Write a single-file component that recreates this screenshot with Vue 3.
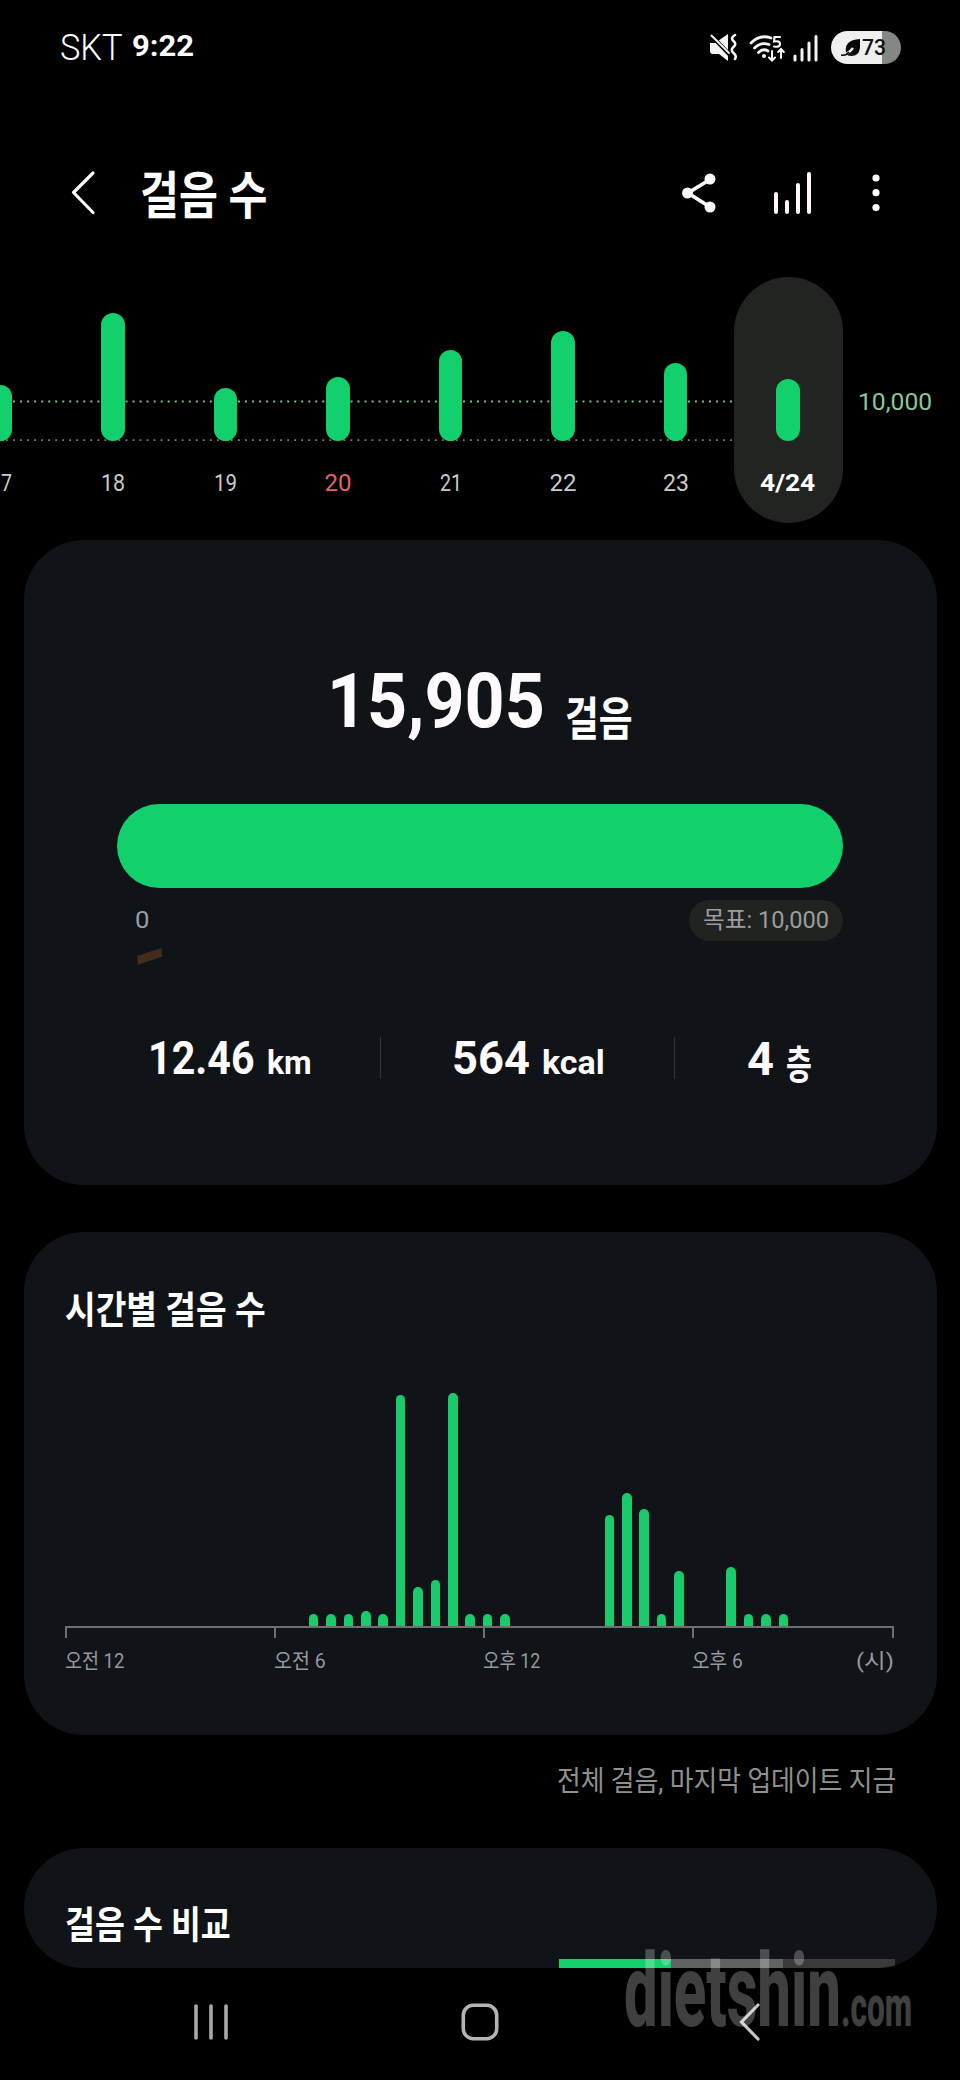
<script setup>
// Scales a label horizontally so that it occupies the given width in the row.
const vFit = {
  mounted(el, binding) {
    const natural = el.offsetWidth
    el.style.transform = `scaleX(${binding.value / natural})`
    el.style.marginRight = `${binding.value - natural}px`
  },
}

const days = [
  { label: '17', h: 56, w: 22 },
  { label: '18', h: 128, w: 24 },
  { label: '19', h: 53, w: 23 },
  { label: '20', h: 64, w: 27, holiday: true },
  { label: '21', h: 91, w: 22 },
  { label: '22', h: 110, w: 27 },
  { label: '23', h: 78, w: 26 },
  { label: '4/24', h: 62, w: 55, today: true },
]

const half = Array(48).fill(0)
Object.assign(half, {
  14: 12, 15: 12, 16: 12, 17: 15, 18: 12, 19: 231, 20: 39, 21: 46, 22: 233,
  23: 12, 24: 12, 25: 12, 31: 111, 32: 133, 33: 117, 34: 12, 35: 55,
  38: 59, 39: 12, 40: 12, 41: 12,
})

const hours = [
  { label: '오전 12', w: 59 },
  { label: '오전 6', w: 52 },
  { label: '오후 12', w: 57 },
  { label: '오후 6', w: 51 },
]
</script>

<template>
  <div class="phone">
    <header class="status">
      <span v-fit="63" class="carrier">SKT</span>
      <span v-fit="62" class="clock">9:22</span>
      <span class="grow"></span>
      <svg class="ic-mute" width="28" height="30" viewBox="0 0 28 30">
        <path d="M1 10h5L19 1v27l-9-7H4q-3 0-3-3z" fill="#f4f4f4" />
        <path d="M0 0L21 22" stroke="#000" stroke-width="4" />
        <path d="M2.500 2.500L20 20" stroke="#f4f4f4" stroke-width="2" stroke-linecap="round" />
        <path d="M26 2q-5 3-1.500 6t0 6 0 6 1.500 6" fill="none" stroke="#f4f4f4" stroke-width="2.600" stroke-linecap="round" />
      </svg>
      <svg class="ic-wifi" width="36" height="28" viewBox="0 0 36 28">
        <g fill="none" stroke="#f4f4f4" stroke-width="2.800" stroke-linecap="round">
          <path d="M2 9Q11 0 22 4" />
          <path d="M5.500 14Q12 7.500 20 10.500" />
          <path d="M9.500 18.500Q14 14 19 17" />
          <path d="M31 3h-5.500l-.4 4.500q5.900-1 5.900 2.500t-6 2.500" stroke-width="2.200" />
          <path d="M23 17v9M20 23.500l3 3 3-3M32 24v-8.500M29.200 18l2.800-3 2.800 3" stroke-width="2" />
        </g>
        <circle cx="15" cy="22" r="2" fill="#f4f4f4" />
      </svg>
      <svg class="ic-signal" width="26" height="28" viewBox="0 0 26 28">
        <path d="M2 22v4M9 15.500v10.500M16 9v17M23 2.500v23.500" stroke="#f4f4f4" stroke-width="3" stroke-linecap="round" />
      </svg>
      <span class="battery">
        <svg width="20" height="18" viewBox="0 0 20 18">
          <path d="M19 0v9q-1 8-9 8-3 0-5-2Q3 5 11 1.500 15 0 19 0z" fill="#050505" />
          <path d="M1 15.500q6 0 11-6.500" fill="none" stroke="#efefef" stroke-width="2.400" />
          <path d="M0 16q5 1 8-3" fill="none" stroke="#050505" stroke-width="1.600" />
        </svg>
        <span v-fit="24" class="level">73</span>
      </span>
    </header>

    <div class="appbar">
      <svg class="ic-back" width="26" height="46" viewBox="0 0 26 46">
        <path d="M23 3L3.500 22.500 23 42.500" fill="none" stroke="#fafafa" stroke-width="3.200" stroke-linecap="round" stroke-linejoin="round" />
      </svg>
      <h1 v-fit="127" class="title">걸음 수</h1>
      <span class="grow"></span>
      <svg class="ic-share" width="36" height="40" viewBox="0 0 36 40">
        <path d="M29 6.500L7 20l22 14" fill="none" stroke="#fafafa" stroke-width="3.800" />
        <circle cx="6.500" cy="20" r="5.500" fill="#fafafa" />
        <circle cx="29" cy="6" r="5.500" fill="#fafafa" />
        <circle cx="29" cy="34" r="5.500" fill="#fafafa" />
      </svg>
      <svg class="ic-chart" width="40" height="44" viewBox="0 0 40 44">
        <path d="M3 23v18M14 31v10M25 14v27M36 3v38" stroke="#fff7fc" stroke-width="4" stroke-linecap="round" />
      </svg>
      <svg class="ic-more" width="8" height="40" viewBox="0 0 8 40">
        <circle cx="4" cy="5" r="3.600" fill="#fafafa" />
        <circle cx="4" cy="19.700" r="3.600" fill="#fafafa" />
        <circle cx="4" cy="34.500" r="3.600" fill="#fafafa" />
      </svg>
    </div>

    <section class="week">
      <svg class="guides" width="732" height="44" viewBox="0 0 732 44">
        <path d="M6 2.500H732" stroke="#83ba92" stroke-width="2" stroke-dasharray="2 5.030" />
        <path d="M6 41.200H732" stroke="#7d7d7d" stroke-width="1.800" stroke-dasharray="1.800 5.230" />
      </svg>
      <div v-for="d in days" :key="d.label" class="day" :class="{ today: d.today, holiday: d.holiday }">
        <i class="bar" :style="{ height: d.h + 'px' }"></i>
        <span class="day-label"><span v-fit="d.w" class="fit">{{ d.label }}</span></span>
      </div>
      <span class="goal-line"><span v-fit="74" class="fit">10,000</span></span>
    </section>

    <section class="card summary">
      <div class="total">
        <span v-fit="218" class="count">15,905</span>
        <span v-fit="68" class="unit">걸음</span>
      </div>
      <div class="progress"></div>
      <div class="scale">
        <span v-fit="15" class="zero">0</span>
        <span class="goal"><span v-fit="126" class="fit">목표: 10,000</span></span>
      </div>
      <svg class="confetti" width="28" height="20" viewBox="0 0 28 20">
        <path d="M1 9L25.500 1l.7 8.500L2 18z" fill="#402d1b" />
      </svg>
      <div class="stats">
        <div class="stat km"><span v-fit="107" class="num">12.46</span><span v-fit="45" class="lab">km</span></div>
        <i class="rule"></i>
        <div class="stat kcal"><span v-fit="78" class="num">564</span><span v-fit="63" class="lab">kcal</span></div>
        <i class="rule"></i>
        <div class="stat floors"><span v-fit="27" class="num">4</span><span v-fit="26" class="lab ko">층</span></div>
      </div>
    </section>

    <section class="card hourly">
      <h2 class="card-title"><span v-fit="201" class="fit">시간별 걸음 수</span></h2>
      <div class="plot">
        <div v-for="(h, i) in half" :key="i" class="slot">
          <i v-if="h" class="hbar" :style="{ height: h + 'px' }"></i>
        </div>
      </div>
      <div class="axis"><i></i><i></i><i></i><i></i></div>
      <div class="hours">
        <span v-for="t in hours" :key="t.label" class="hour"><span v-fit="t.w" class="fit">{{ t.label }}</span></span>
        <span class="hour-unit"><span v-fit="38" class="fit">(시)</span></span>
      </div>
    </section>

    <p class="updated"><span v-fit="339" class="fit">전체 걸음, 마지막 업데이트 지금</span></p>

    <section class="card compare">
      <h2 class="card-title"><span v-fit="166" class="fit">걸음 수 비교</span></h2>
      <div class="strip"><i></i><i></i><i></i></div>
    </section>

    <nav class="nav">
      <svg width="36" height="40" viewBox="0 0 36 40">
        <path d="M3 4v32M18 4v32M33 4v32" stroke="#a9a9a9" stroke-width="3.600" stroke-linecap="round" />
      </svg>
      <svg class="home" width="38" height="40" viewBox="0 0 38 40">
        <rect x="2.300" y="3.300" width="33.400" height="33.400" rx="10" fill="none" stroke="#b4b4b4" stroke-width="3.600" />
      </svg>
      <svg width="22" height="40" viewBox="0 0 22 40">
        <path d="M19 3L2.500 20 19 37" fill="none" stroke="#c6c6c6" stroke-width="3.200" stroke-linecap="round" />
      </svg>
    </nav>

    <div class="watermark">
      <span v-fit="217" class="wm-name">dietshin</span><span v-fit="71" class="wm-tld">.com</span>
    </div>
  </div>
</template>

<style>
body {
  background: #000;
}
</style>

<style scoped>
.phone {
  position: relative;
  box-sizing: border-box;
  width: 960px;
  height: 2080px;
  overflow: hidden;
  background: #000;
  color: #fff;
  font-family: Roboto, 'Noto Sans CJK KR', sans-serif;
  white-space: nowrap;
}
.grow {
  flex: 1;
}
.fit,
.carrier,
.clock,
.level,
.title,
.count,
.unit,
.zero,
.num,
.lab,
.wm-name,
.wm-tld {
  display: inline-block;
  transform-origin: 0 50%;
}
h1,
h2,
p {
  margin: 0;
}
i {
  display: block;
}

.status {
  display: flex;
  align-items: center;
  height: 95px;
  padding: 0 59px 0 60px;
}
.carrier {
  font-size: 36px;
  font-weight: 300;
}
.clock {
  margin-left: 9px;
  padding-bottom: 4px;
  font-size: 30px;
  font-weight: 700;
}
.ic-wifi {
  margin-left: 12px;
}
.ic-signal {
  margin-left: 8px;
}
.battery {
  display: flex;
  align-items: center;
  box-sizing: border-box;
  width: 70px;
  height: 33px;
  margin-left: 12px;
  padding-left: 10px;
  border-radius: 17px;
  background: linear-gradient(90deg, #efefef 51px, #858785 51px);
  color: #111;
}
.level {
  margin-left: 1px;
  font-size: 22px;
  font-weight: 500;
}

.appbar {
  display: flex;
  align-items: center;
  height: 196px;
  margin-top: 0;
  padding: 0 80px 0 70px;
}
.title {
  margin-left: 44px;
  padding-top: 8px;
  font-size: 51px;
  font-weight: 700;
  line-height: 76px;
}
.ic-chart {
  margin-left: 56px;
}
.ic-more {
  margin-left: 59px;
}

.week {
  position: relative;
  display: flex;
  height: 246px;
  margin: -14px 0 17px -54px;
}
.guides {
  position: absolute;
  left: 54px;
  top: 122px;
}
.day {
  position: relative;
  display: flex;
  flex-direction: column;
  align-items: center;
  justify-content: flex-end;
  flex: none;
  box-sizing: border-box;
  width: 109px;
  height: 246px;
  margin-right: 3.500px;
  padding-bottom: 23px;
}
.bar {
  width: 23.600px;
  border-radius: 12px;
  background: #12d06c;
}
.day-label {
  height: 34px;
  margin-top: 25px;
  color: #cacaca;
  font-size: 24px;
  line-height: 34px;
}
.holiday .day-label {
  color: #e0646c;
}
.today {
  border-radius: 55px;
  background: #222422;
}
.today .day-label {
  color: #fff;
  font-weight: 700;
}
.goal-line {
  margin: 108px 0 0 12px;
  color: #8cc795;
  font-size: 24px;
  line-height: 34px;
}

.card {
  box-sizing: border-box;
  width: 913px;
  margin-left: 24px;
  border-radius: 60px;
  background: #101317;
}
.summary {
  height: 645px;
  padding: 111px 94px 0 93px;
}
.total {
  display: flex;
  align-items: baseline;
  height: 153px;
  padding-left: 210px;
}
.count {
  color: #fffafd;
  font-size: 76px;
  font-weight: 700;
  line-height: 100px;
}
.unit {
  position: relative;
  top: 8px;
  margin-left: 20px;
  font-size: 46px;
  font-weight: 700;
  line-height: 60px;
}
.progress {
  height: 84px;
  border-radius: 42px;
  background: #12d06c;
}
.scale {
  display: flex;
  justify-content: space-between;
  height: 41px;
  margin-top: 12px;
  color: #9b9da0;
  font-size: 24px;
  line-height: 41px;
}
.zero {
  margin-left: 18px;
}
.goal {
  padding: 0 14px;
  border-radius: 21px;
  background: #20231f;
}
.goal .fit {
  line-height: 39px;
}
.confetti {
  display: block;
  margin: 6px 0 0 19px;
}
.stats {
  display: flex;
  align-items: center;
  height: 42px;
  margin-top: 70px;
}
.stat {
  display: flex;
  align-items: baseline;
  padding-top: 4px;
  color: #fffafd;
  font-weight: 700;
}
.num {
  font-size: 47px;
  line-height: 50px;
}
.lab {
  font-size: 34px;
  line-height: 50px;
}
.ko {
  position: relative;
  top: 4px;
  font-size: 40px;
}
.km {
  width: 232px;
  padding-left: 31px;
  gap: 12px;
}
.kcal {
  width: 222px;
  padding-left: 71px;
  gap: 12px;
}
.floors {
  padding-left: 72px;
  gap: 12px;
}
.rule {
  width: 1px;
  height: 42px;
  background: #303337;
}

.hourly {
  height: 503px;
  margin-top: 47px;
  padding: 50px 0 0 41px;
}
.card-title {
  height: 56px;
  font-size: 38px;
  font-weight: 700;
  line-height: 56px;
}
.plot {
  display: flex;
  align-items: flex-end;
  height: 288px;
}
.slot {
  flex: none;
  width: 17.420px;
}
.hbar {
  width: 9.600px;
  border-radius: 5px 5px 0 0;
  background: #1acb6c;
}
.axis {
  display: flex;
  box-sizing: border-box;
  width: 829px;
  height: 12px;
  border-top: 2px solid #6d6f71;
  border-right: 2px solid #6d6f71;
}
.axis i {
  box-sizing: border-box;
  flex: none;
  width: 209px;
  border-left: 2px solid #6d6f71;
}
.axis i:last-child {
  width: 200px;
}
.hours {
  display: flex;
  height: 32px;
  margin-top: 7px;
  color: #97999c;
  font-size: 21px;
  line-height: 32px;
}
.hour {
  width: 209px;
}
.hour-unit {
  margin-left: -45px;
}

.updated {
  height: 44px;
  margin: 25px 64px 0 0;
  color: #909090;
  font-size: 28px;
  line-height: 44px;
  text-align: right;
}

.compare {
  height: 120px;
  margin-top: 44px;
  padding: 49px 0 0 41px;
  overflow: hidden;
}
.strip {
  display: flex;
  height: 9px;
  margin: 6px 0 0 494px;
}
.strip i {
  width: 112px;
  background: #12d06c;
}
.strip i:nth-child(2) {
  background: #606263;
}
.strip i:nth-child(3) {
  background: #3b3b3b;
}

.nav {
  display: flex;
  justify-content: space-between;
  height: 40px;
  margin-top: 34px;
  padding: 0 199px 0 193px;
}
.home {
  margin-right: 8px;
}

.watermark {
  position: absolute;
  left: 624px;
  top: 1931px;
  display: flex;
  align-items: baseline;
  color: #fff;
  font-weight: 800;
  opacity: 0.25;
}
.wm-name {
  font-size: 102px;
  line-height: 120px;
}
.wm-tld {
  font-size: 58px;
}
</style>
